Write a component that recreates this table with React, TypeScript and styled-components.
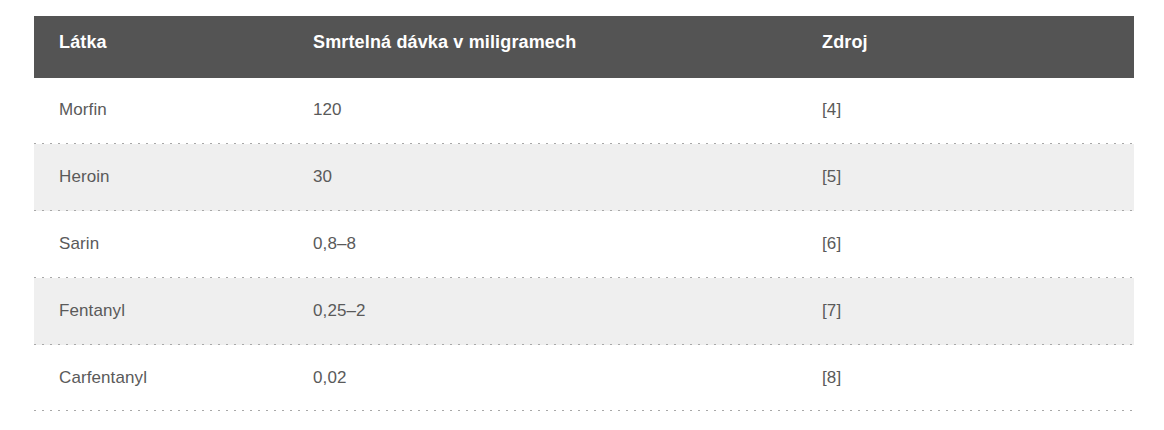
import React from "react";
import styled, { createGlobalStyle } from "styled-components";

const rows = [
  { name: "Morfin", dose: "120", source: "[4]" },
  { name: "Heroin", dose: "30", source: "[5]" },
  { name: "Sarin", dose: "0,8–8", source: "[6]" },
  { name: "Fentanyl", dose: "0,25–2", source: "[7]" },
  { name: "Carfentanyl", dose: "0,02", source: "[8]" },
];

const App = () => {
  return (
    <>
      <GlobalStyle />
      <Page>
        <Table>
          <HeadRow>
            <HeadCell>Látka</HeadCell>
            <HeadCell>Smrtelná dávka v miligramech</HeadCell>
            <HeadCell>Zdroj</HeadCell>
          </HeadRow>
          {rows.map((row, i) => (
            <Row key={row.name} $striped={i % 2 === 1}>
              <Cell>{row.name}</Cell>
              <Cell>{row.dose}</Cell>
              <Cell>{row.source}</Cell>
            </Row>
          ))}
        </Table>
      </Page>
    </>
  );
};

const GlobalStyle = createGlobalStyle`
  body {
    margin: 0;
    background: #fff;
    font-family: "Liberation Sans", Arial, sans-serif;
  }
`;

const Page = styled.div`
  padding: 16px 30px 0 34px;
`;

const Table = styled.div`
  width: 1100px;
`;

const HeadRow = styled.div`
  display: grid;
  grid-template-columns: 254px 509px 1fr;
  height: 61.5px;
  box-sizing: border-box;
  padding-top: 15.5px;
  background: #545454;
`;

const HeadCell = styled.div`
  padding-left: 25px;
  color: #fff;
  font-size: 18px;
  font-weight: 700;
  line-height: 21px;
  letter-spacing: 0.15px;
`;

const Row = styled.div<{ $striped: boolean }>`
  display: grid;
  grid-template-columns: 254px 509px 1fr;
  align-items: center;
  height: 66.8px;
  box-sizing: border-box;
  padding-bottom: 1px;
  background-color: ${({ $striped }) => ($striped ? "#efefef" : "#fff")};
  background-image: linear-gradient(to right, #a8a8a8 2px, transparent 2px);
  background-size: 8px 1px;
  background-repeat: repeat-x;
  background-position: 0 bottom;
`;

const Cell = styled.div`
  padding-left: 25px;
  color: #5a5a5a;
  font-size: 17px;
  line-height: 20px;
  letter-spacing: 0.1px;
`;

export default App;
